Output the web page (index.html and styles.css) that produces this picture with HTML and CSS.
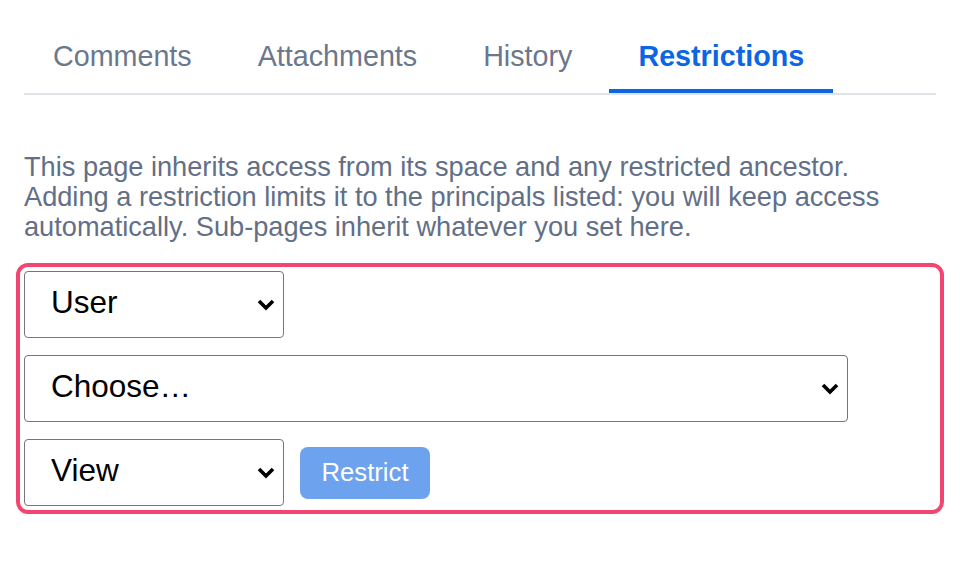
FILE: index.html
```html
<!DOCTYPE html>
<html lang="en">
<head>
<meta charset="utf-8">
<title>Restrictions</title>
<link rel="stylesheet" href="styles.css">
</head>
<body>
<div class="page">
  <nav class="tabs">
    <a class="tab">Comments</a>
    <a class="tab">Attachments</a>
    <a class="tab">History</a>
    <a class="tab active">Restrictions</a>
  </nav>
  <p class="intro">This page inherits access from its space and any restricted ancestor. Adding a restriction limits it to the principals listed: you will keep access automatically. Sub-pages inherit whatever you set here.</p>
  <form class="panel">
    <div class="row">
      <div class="select short">
        <select><option>User</option><option>Group</option></select>
        <svg class="chev" width="18" height="12" viewBox="0 0 18 12"><polyline points="2,2 9,9 16,2" fill="none" stroke="#000" stroke-width="3.6"/></svg>
      </div>
    </div>
    <div class="row">
      <div class="select long">
        <select><option>Choose…</option></select>
        <svg class="chev" width="18" height="12" viewBox="0 0 18 12"><polyline points="2,2 9,9 16,2" fill="none" stroke="#000" stroke-width="3.6"/></svg>
      </div>
    </div>
    <div class="row">
      <div class="select short">
        <select><option>View</option><option>Edit</option></select>
        <svg class="chev" width="18" height="12" viewBox="0 0 18 12"><polyline points="2,2 9,9 16,2" fill="none" stroke="#000" stroke-width="3.6"/></svg>
      </div>
      <button type="button" class="btn" disabled>Restrict</button>
    </div>
  </form>
</div>
</body>
</html>
```

FILE: styles.css
```css
* { box-sizing: border-box; }
html, body { margin: 0; padding: 0; background: #fff; }
body { font-family: "Liberation Sans", Arial, sans-serif; }
.page { padding: 25px 24px 0; }
.tabs {
  display: flex;
  gap: 8px;
  border-bottom: 2px solid #e2e3e8;
}
.tab {
  font-size: 28.7px;
  line-height: 32px;
  padding: 15px 29px 17px;
  color: #6b778c;
  border-bottom: 4px solid transparent;
}
.tab.active {
  color: #0c66e4;
  font-weight: bold;
  border-bottom-color: #0c66e4;
}
.intro {
  margin: 57px 0 21px;
  font-size: 27.2px;
  line-height: 30px;
  color: #626f86;
}
.panel {
  margin: 0 -8px;
  border: 4px solid #f2456f;
  border-radius: 12px;
  padding: 4px;
  display: flex;
  flex-direction: column;
  gap: 17px;
}
.row {
  display: flex;
  align-items: center;
  gap: 16px;
}
.select { position: relative; }
.select.short { width: 260px; }
.select.long { width: 824px; }
.select select {
  appearance: none;
  -webkit-appearance: none;
  width: 100%;
  height: 67px;
  border: 1px solid #767676;
  border-radius: 4px;
  background: #fff;
  font-family: "Liberation Sans", Arial, sans-serif;
  font-size: 31.5px;
  color: #000;
  padding: 0 40px 5px 26px;
  margin: 0;
}
.chev {
  position: absolute;
  right: 9px;
  top: 28px;
  pointer-events: none;
}
.btn {
  height: 52px;
  width: 130px;
  border: none;
  border-radius: 8px;
  background: #0c66e4;
  opacity: 0.6;
  color: #fff;
  font-family: "Liberation Sans", Arial, sans-serif;
  font-size: 25.7px;
  padding: 0;
}
```
